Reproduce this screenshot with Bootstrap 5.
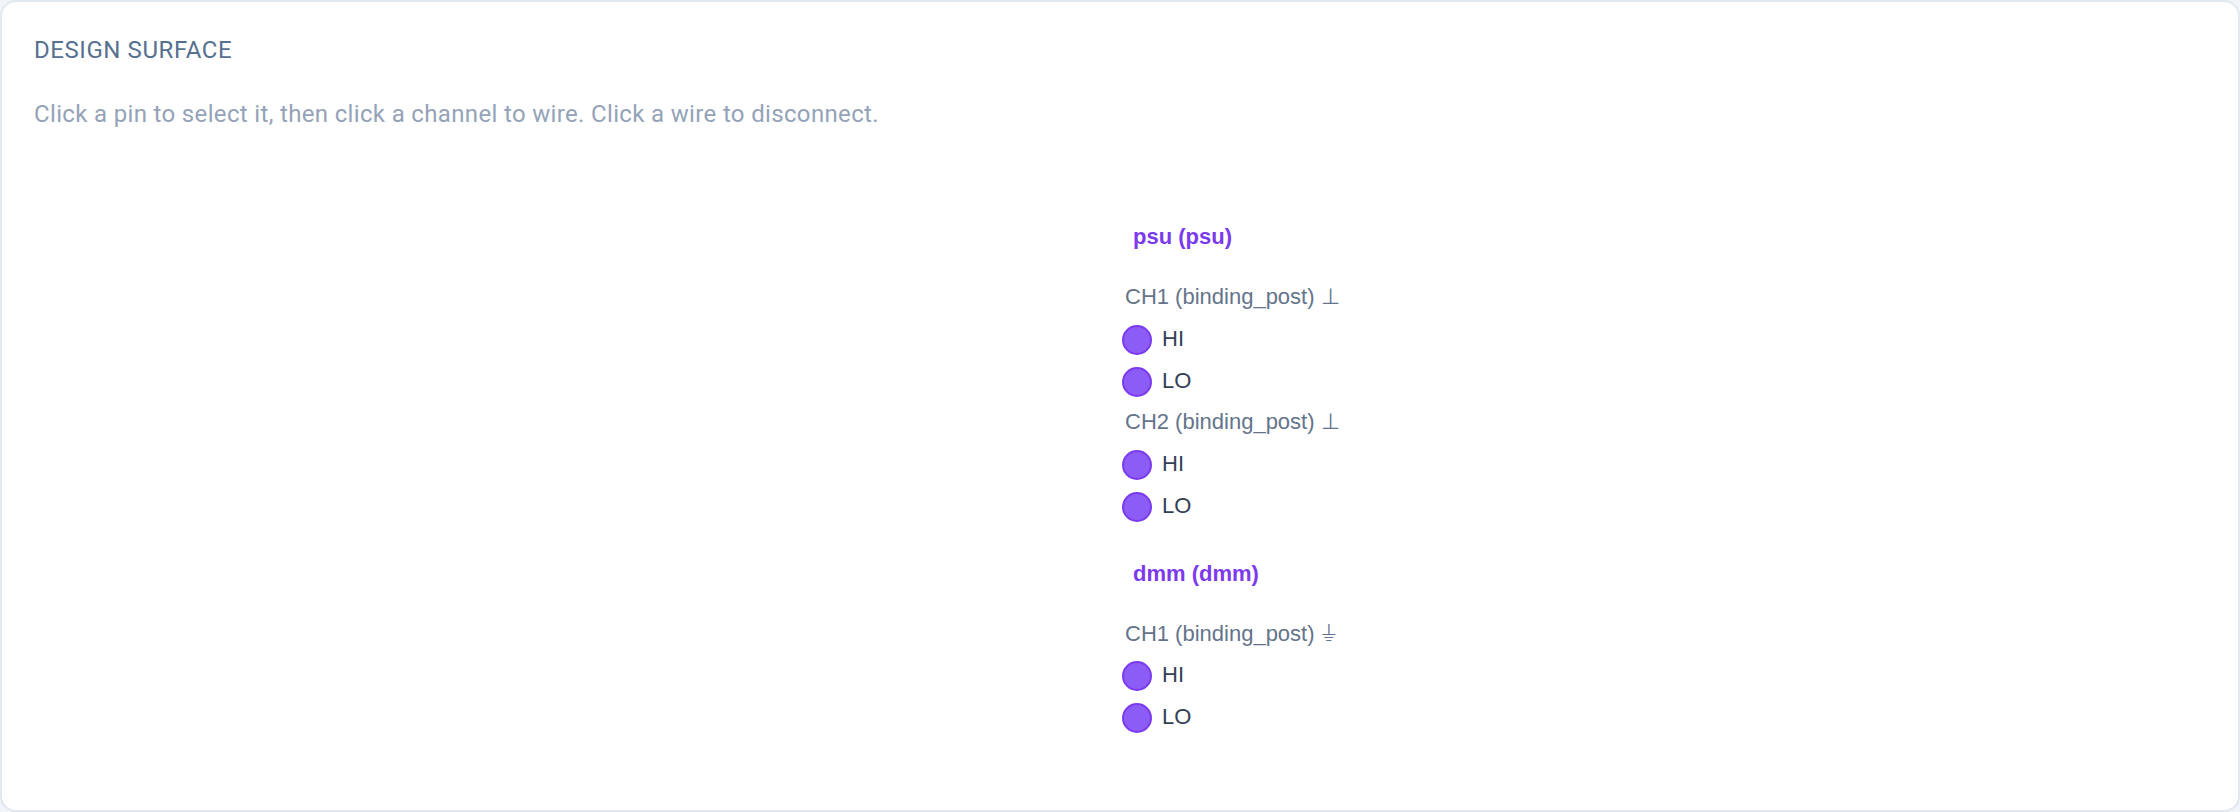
<!DOCTYPE html>
<html lang="en">
<head>
<meta charset="utf-8">
<title>Design surface</title>
<link href="https://cdn.jsdelivr.net/npm/bootstrap@5.3.0/dist/css/bootstrap.min.css" rel="stylesheet">
<style>
html,body{height:100%;background:#f1f5f9}
.surface-panel{height:812px;background:#fff;border:2px solid #e2e8f0;border-radius:16px;padding:32px 32px 0;font-family:Roboto,sans-serif;overflow:hidden}
.surface-title{font-size:24px;line-height:32px;letter-spacing:.57px;color:#56708f;font-weight:400;margin:0}
.surface-hint{font-size:24px;line-height:32px;letter-spacing:.34px;color:#94a3b8;margin:32px 0 0}
.diagram{font-family:"Liberation Sans",Arial,sans-serif;width:300px;margin:92px 0 0 1088px}
.inst-name{font-size:22px;font-weight:700;color:#7c3aed;line-height:30px;margin:0 0 0 11px}
.inst-block{margin-bottom:32.5px}
.chan-name{font-size:22px;line-height:41px;height:41px;color:#64748b;margin:24px 0 0 3px;white-space:nowrap}
.chan-name.next{margin-top:0}
.pin-row{height:42px;font-size:22px;color:#334155}
.pin-dot{width:30px;height:30px;border-radius:50%;background:#8b5cf6;border:2px solid #7c3aed;flex:none;margin:3px 10px 0 0}
</style>
</head>
<body class="m-0">
<main class="surface-panel">
  <h1 class="surface-title">DESIGN SURFACE</h1>
  <p class="surface-hint">Click a pin to select it, then click a channel to wire. Click a wire to disconnect.</p>
  <div class="diagram">
    <div class="inst-block">
      <div class="inst-name">psu (psu)</div>
      <div class="chan-name">CH1 (binding_post) ⊥</div>
      <div class="pin-row d-flex align-items-center"><span class="pin-dot"></span>HI</div>
      <div class="pin-row d-flex align-items-center"><span class="pin-dot"></span>LO</div>
      <div class="chan-name next">CH2 (binding_post) ⊥</div>
      <div class="pin-row d-flex align-items-center"><span class="pin-dot"></span>HI</div>
      <div class="pin-row d-flex align-items-center"><span class="pin-dot"></span>LO</div>
    </div>
    <div class="inst-block">
      <div class="inst-name">dmm (dmm)</div>
      <div class="chan-name">CH1 (binding_post) ⏚</div>
      <div class="pin-row d-flex align-items-center"><span class="pin-dot"></span>HI</div>
      <div class="pin-row d-flex align-items-center"><span class="pin-dot"></span>LO</div>
    </div>
  </div>
</main>
<script src="https://cdn.jsdelivr.net/npm/bootstrap@5.3.0/dist/js/bootstrap.bundle.min.js"></script>
</body>
</html>
